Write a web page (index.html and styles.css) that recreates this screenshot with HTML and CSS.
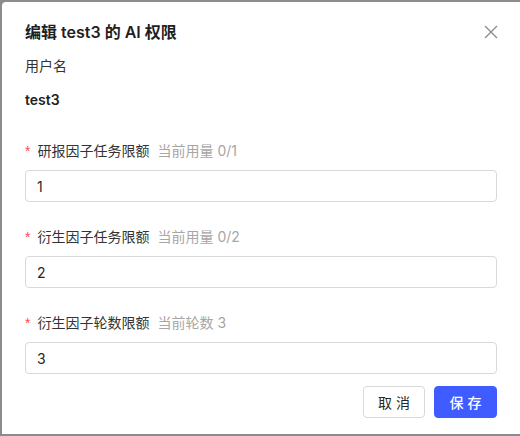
FILE: index.html
```html
<!DOCTYPE html>
<html lang="zh-CN">
<head>
<meta charset="utf-8">
<title>编辑 AI 权限</title>
<link rel="stylesheet" href="styles.css">
</head>
<body>
<div class="modal">
  <div class="modal-header">
    <h2 class="modal-title">编辑 test3 的 AI 权限</h2>
    <button class="close" aria-label="关闭">
      <svg width="14" height="14" viewBox="0 0 14 14"><path d="M1 1L13 13M13 1L1 13" stroke="#8a8a8a" stroke-width="1.3" fill="none"/></svg>
    </button>
  </div>
  <div class="field-static">
    <div class="static-label">用户名</div>
    <div class="static-value">test3</div>
  </div>
  <div class="form-item">
    <label class="form-label"><span class="req">*</span>研报因子任务限额<span class="hint">当前用量 0/1</span></label>
    <input class="input" type="text" value="1">
  </div>
  <div class="form-item">
    <label class="form-label"><span class="req">*</span>衍生因子任务限额<span class="hint">当前用量 0/2</span></label>
    <input class="input" type="text" value="2">
  </div>
  <div class="form-item">
    <label class="form-label"><span class="req">*</span>衍生因子轮数限额<span class="hint">当前轮数 3</span></label>
    <input class="input" type="text" value="3">
  </div>
  <div class="footer">
    <button class="btn btn-default"><span class="btn-text">取消</span></button>
    <button class="btn btn-primary"><span class="btn-text">保存</span></button>
  </div>
</div>
</body>
</html>
```

FILE: styles.css
```css
html, body {
  margin: 0;
  padding: 0;
  height: 100%;
  overflow: hidden;
  background: #8c8c8c;
}
body {
  font-family: "Inter", "Noto Sans CJK SC", sans-serif;
  color: #262626;
  font-size: 14px;
}
.modal {
  margin: 2px 0 0 2px;
  width: 472px;
  padding: 18px 25px 16px 23px;
  background: #fff;
  border-radius: 4px 0 0 0;
}
.modal-header {
  display: flex;
  align-items: center;
  justify-content: space-between;
}
.modal-title {
  margin: 0;
  font-size: 16px;
  font-weight: 600;
  line-height: 24px;
  color: #1f1f1f;
}
.close {
  border: 0;
  background: none;
  padding: 0;
  width: 14px;
  height: 14px;
  margin-right: -1px;
  display: flex;
}
.field-static {
  margin-top: 11px;
}
.static-label {
  line-height: 22px;
  color: #333;
}
.static-value {
  margin-top: 12px;
  line-height: 22px;
  font-weight: 600;
  color: #1f1f1f;
}
.form-item {
  margin-top: 24px;
}
.field-static + .form-item {
  margin-top: 29px;
}
.form-label {
  display: block;
  line-height: 22px;
  color: #333;
}
.req {
  color: #ff4d4f;
  margin-right: 7px;
  font-family: "Liberation Sans", sans-serif;
}
.hint {
  color: #a6a6a6;
  margin-left: 8px;
}
.input {
  display: block;
  box-sizing: border-box;
  width: 100%;
  height: 32px;
  margin-top: 8px;
  padding: 0 11px;
  border: 1px solid #d9d9d9;
  border-radius: 4px;
  font-family: inherit;
  font-size: 14px;
  color: #262626;
  outline: none;
}
.footer {
  display: flex;
  justify-content: flex-end;
  gap: 9px;
  margin-top: 12px;
}
.btn {
  height: 32px;
  box-sizing: border-box;
  padding: 0;
  white-space: nowrap;
  font-family: inherit;
  font-size: 14px;
  border-radius: 4px;
}
.btn-text {
  letter-spacing: 4px;
  margin-right: -4px;
}
.btn-default {
  background: #fff;
  border: 1px solid #d9d9d9;
  color: #262626;
  width: 62px;
}
.btn-primary {
  background: #3e5cff;
  border: 1px solid #3e5cff;
  color: #fff;
  width: 63px;
  font-weight: 500;
}
```
